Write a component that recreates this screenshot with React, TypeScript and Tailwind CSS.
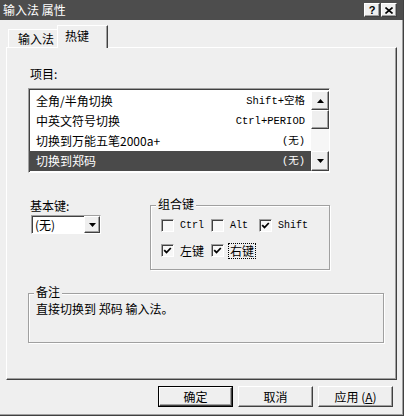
import React from "react";

// Win98 style bevels
const raised =
  "bg-[#efefef] border border-t-white border-l-white border-r-[#404040] border-b-[#404040] shadow-[inset_-1px_-1px_0_#a0a0a0]";
const sunken =
  "border border-t-[#a0a0a0] border-l-[#a0a0a0] border-r-white border-b-white shadow-[inset_1px_1px_0_#404040]";
const cjk = "font-['Noto_Sans_CJK_SC',sans-serif]";
const mono = "font-['Liberation_Mono','Noto_Sans_CJK_SC',monospace]";

const Arrow = ({ down }: { down?: boolean }) => (
  <svg width="7" height="4" viewBox="0 0 7 4">
    <path d={down ? "M0 0h7L3.5 4z" : "M0 4h7L3.5 0z"} fill="#000" />
  </svg>
);

const Check = () => (
  <svg width="9" height="9" viewBox="0 0 9 9">
    <path d="M1.2 4.2l2.3 2.3L7.8 2" fill="none" stroke="#000" strokeWidth="1.8" />
  </svg>
);

const rows = [
  ["全角/半角切换", "Shift+空格"],
  ["中英文符号切换", "Ctrl+PERIOD"],
  ["切换到万能五笔2000a+", "(无)"],
  ["切换到郑码", "(无)"],
];

function CheckBox({
  checked,
  label,
  width,
  ascii,
  focus,
}: {
  checked?: boolean;
  label: string;
  width: string;
  ascii?: boolean;
  focus?: boolean;
}) {
  return (
    <div className={`flex items-center gap-[4px] ${width}`}>
      <span className={`w-[13px] h-[13px] bg-[#f7f7f7] flex items-center justify-center ${sunken}`}>
        {checked && <Check />}
      </span>
      <span
        className={`leading-[14px] px-[1px] ${ascii ? `${mono} text-[10px]` : `${cjk} text-[12px]`} ${
          focus ? "border border-dotted border-black" : "border border-transparent"
        }`}
      >
        {label}
      </span>
    </div>
  );
}

function GroupBox({
  title,
  className,
  children,
}: {
  title: string;
  className: string;
  children: React.ReactNode;
}) {
  return (
    <div
      className={`relative border border-[#a0a0a0] shadow-[inset_1px_1px_0_#ffffff,1px_1px_0_#ffffff] ${className}`}
    >
      <span className="absolute -top-[8px] left-[5px] px-[2px] bg-[#efefef] text-[12px] leading-[12px]">
        {title}
      </span>
      {children}
    </div>
  );
}

export default function App() {
  return (
    <div
      className={`w-[404px] h-[416px] bg-[#efefef] text-black flex flex-col border-r border-b border-[#404040] shadow-[inset_-1px_-1px_0_#a0a0a0] ${cjk}`}
    >
      {/* title bar */}
      <div className="h-[20px] bg-[#4d4d4d] flex items-center justify-between pl-[3px] pr-[6px]">
        <span className="text-white text-[12px] leading-[14px]">输入法&nbsp;属性</span>
        <div className="flex gap-[1px]">
          <div className={`w-[16px] h-[14px] flex items-center justify-center ${raised}`}>
            <span className="font-['Liberation_Sans',sans-serif] font-bold text-[11px] leading-[11px]">?</span>
          </div>
          <div className={`w-[16px] h-[14px] flex items-center justify-center ${raised}`}>
            <svg width="8" height="7" viewBox="0 0 8 7">
              <path d="M0.5 0.5L7.5 6.5M7.5 0.5L0.5 6.5" stroke="#000" strokeWidth="1.6" />
            </svg>
          </div>
        </div>
      </div>

      {/* tabs */}
      <div className="mt-[5px] h-[22px] flex items-end pl-[8px] relative z-10">
        <div className="w-[49px] h-[18px] pl-[9px] border-t border-l border-white text-[12px] leading-[18px]">
          输入法
        </div>
        <div className="w-[51px] h-[23px] -mb-[1px] pl-[7px] pt-[3px] bg-[#efefef] border-t border-l border-white border-r border-r-[#404040] shadow-[inset_-1px_0_0_#a0a0a0] text-[12px] leading-[14px]">
          热键
        </div>
      </div>

      {/* panel */}
      <div className="ml-[6px] w-[391px] h-[333px] border border-t-white border-l-white border-r-[#404040] border-b-[#404040] shadow-[inset_-1px_-1px_0_#a0a0a0] pl-[21px] pt-[19px] flex flex-col">
        <div className="pl-[2px] h-[14px] text-[12px] leading-[14px]">项目:</div>

        {/* list */}
        <div className={`mt-[7px] w-[302px] h-[85px] bg-white flex pt-[2px] ${sunken}`}>
          <div className="flex-1 flex flex-col">
            {rows.map(([name, key], i) => (
              <div
                key={name}
                className={`h-[20px] flex items-center justify-between pl-[7px] pr-[6px] ${
                  i === 3 ? "bg-[#4a4a4a] text-white" : ""
                }`}
              >
                <span className="text-[12px] leading-[14px]">{name}</span>
                <span className={`${mono} text-[10.5px] leading-[14px]`}>{key}</span>
              </div>
            ))}
          </div>
          <div className="w-[18px] h-[80px] flex flex-col">
            <div className={`h-[19px] flex items-center justify-center ${raised}`}>
              <Arrow />
            </div>
            <div className={`h-[19px] ${raised}`} />
            <div className="flex-1 bg-[#f6f6f6]" />
            <div className={`h-[20px] flex items-center justify-center ${raised}`}>
              <Arrow down />
            </div>
          </div>
        </div>

        {/* keys */}
        <div className="mt-[26px] flex">
          <div className="w-[122px] flex flex-col">
            <div className="pl-[2px] h-[14px] text-[12px] leading-[14px]">基本键:</div>
            <div className={`mt-[2px] ml-[3px] w-[70px] h-[19px] bg-white flex items-stretch ${sunken}`}>
              <span className="flex-1 pl-[3px] text-[12px] leading-[17px]">(无)</span>
              <div className={`w-[16px] flex items-center justify-center ${raised}`}>
                <Arrow down />
              </div>
            </div>
          </div>
          <div className="pt-[6px]">
            <GroupBox title="组合键" className="w-[180px] h-[65px] pt-[12px] pl-[10px]">
              <div className="flex h-[15px]">
                <CheckBox label="Ctrl" width="w-[50px]" ascii />
                <CheckBox label="Alt" width="w-[48px]" ascii />
                <CheckBox label="Shift" width="w-[60px]" ascii checked />
              </div>
              <div className="flex h-[15px] mt-[10px]">
                <CheckBox label="左键" width="w-[50px]" checked />
                <CheckBox label="右键" width="w-[60px]" checked focus />
              </div>
            </GroupBox>
          </div>
        </div>

        {/* note */}
        <GroupBox title="备注" className="mt-[23px] w-[356px] h-[50px] pl-[7px] pt-[9px]">
          <div className="text-[12px] leading-[12px]">直接切换到 郑码 输入法。</div>
        </GroupBox>
      </div>

      {/* buttons */}
      <div className="mt-[6px] flex justify-end gap-[5px] pr-[10px]">
        <div className="w-[75px] h-[21px] border border-black flex">
          <div className={`flex-1 flex items-center justify-center text-[12px] ${raised}`}>确定</div>
        </div>
        <div className={`w-[75px] h-[21px] flex items-center justify-center text-[12px] ${raised}`}>取消</div>
        <div className={`w-[75px] h-[21px] flex items-center justify-center text-[12px] ${raised}`}>
          应用 (<span className="underline">A</span>)
        </div>
      </div>
    </div>
  );
}
